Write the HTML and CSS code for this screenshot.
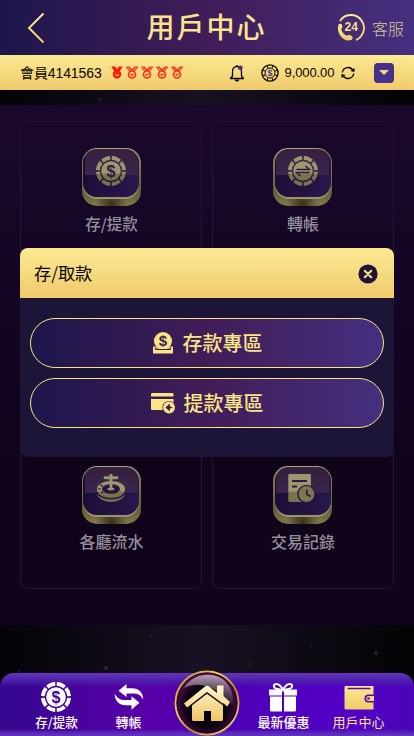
FILE: index.html
```html
<!DOCTYPE html>
<html lang="zh-Hant">
<head>
<meta charset="utf-8">
<meta name="viewport" content="width=device-width, initial-scale=1">
<title>用戶中心</title>
<link rel="stylesheet" href="styles.css">
</head>
<body>
<svg class="defs" width="0" height="0" aria-hidden="true">
  <defs>
    <linearGradient id="gold" x1="0" y1="0" x2="0" y2="1"><stop offset="0" stop-color="#fbea93"/><stop offset="1" stop-color="#f0ca6c"/></linearGradient>
    <linearGradient id="dim" gradientUnits="userSpaceOnUse" x1="0" y1="0" x2="0" y2="30"><stop offset=".56" stop-color="#9d976f"/><stop offset=".62" stop-color="#797349"/></linearGradient>
    <symbol id="ring" viewBox="0 0 30 30"><circle cx="15" cy="15" r="13.100" fill="none" stroke="currentColor" stroke-width="3.800" pathLength="80" stroke-dasharray="8.4 1.6" stroke-dashoffset="-.8"/><circle cx="15" cy="15" r="9.800" fill="currentColor"/></symbol>
    <symbol id="dim-ring" viewBox="0 0 30 30"><circle cx="15" cy="15" r="13.100" fill="none" stroke="url(#dim)" stroke-width="3.800" pathLength="80" stroke-dasharray="8.4 1.6" stroke-dashoffset="-.8"/><circle cx="15" cy="15" r="9.800" fill="url(#dim)"/></symbol>
    <symbol id="medal" viewBox="0 0 12 13"><path d="M.5 1h2.800L6 4 8.700 1h2.800L8.300 5.200M.5 1l3.200 4.200M2.800 1.300L6 5l3.200-3.700" fill="none" stroke="currentColor" stroke-width="1.100"/><circle cx="6" cy="8.500" r="3.500" fill="none" stroke="currentColor" stroke-width="1.600"/><path d="M4.300 8l1.500 1.500L8 7.300" fill="none" stroke="currentColor" stroke-width="1.100"/></symbol>
  </defs>
</svg>
<div class="page">
  <header class="top">
    <svg class="back" width="18" height="32" viewBox="0 0 18 32"><path d="M16.500 1.500L2 16l14.500 14.500" fill="none" stroke="url(#gold)" stroke-width="2"/></svg>
    <h1>用戶中心</h1>
    <a class="service">
      <svg width="30" height="30" viewBox="0 0 30 30"><path d="M4 8A13 13 0 1 1 20 27" fill="none" stroke="url(#gold)" stroke-width="1.900"/><path d="M2.500 11.500c1-1.300 2.600-1 3.300 0l.7 2.500c.1 1-1.500 1.500-1.200 2.600.7 2.800 2.600 4.800 5.200 6 .9.400 1.500-1.200 2.700-.8l2.600 1.200c1.300.8 1 3.300-.5 4-7.500 2.500-15.500-6-12.800-15.500z" fill="url(#gold)"/><text x="15.300" y="18" text-anchor="middle" class="hours">24</text></svg>
      <span>客服</span>
    </a>
  </header>
  <div class="member">
    <span class="name">會員4141563</span>
    <div class="medals">
      <svg viewBox="0 0 12 13"><path d="M.2 .5h4L6 3 7.800.5h4L8.900 5.200a4.300 4.300 0 1 1-5.800 0z" fill="#fb1d08"/><circle cx="6" cy="8.500" r="1.800" fill="#f7dc83"/><path d="M4.700 7l1.300 1.400L8 6.500" fill="none" stroke="#fb1d08" stroke-width="1.200"/></svg>
      <svg viewBox="0 0 12 13"><use href="#medal"/></svg><svg viewBox="0 0 12 13"><use href="#medal"/></svg><svg viewBox="0 0 12 13"><use href="#medal"/></svg><svg viewBox="0 0 12 13"><use href="#medal"/></svg>
    </div>
    <svg class="bell" width="16" height="18" viewBox="0 0 16 18"><path d="M8 1v1M3.500 12V7.500C3.500 4.500 5 2.500 8 2.500s4.500 2 4.500 5V12l2 2.500h-13z" fill="none" stroke="#090500" stroke-width="1.300" stroke-linejoin="round"/><path d="M5.700 15.500a2.300 2 0 0 0 4.600 0z" fill="#090500"/><circle cx="11.300" cy="3.800" r="2.400" fill="#45308a"/></svg>
    <svg class="coin" width="18" height="18" viewBox="0 0 18 18"><circle cx="9" cy="9" r="8.100" fill="none" stroke="#090500" stroke-width="1.300"/><circle cx="9" cy="9" r="6.500" fill="none" stroke="#090500" stroke-width="2" pathLength="80" stroke-dasharray="2 8" stroke-dashoffset="-4"/><circle cx="9" cy="9" r="5" fill="none" stroke="#090500" stroke-width="1"/><text x="9" y="12.200" text-anchor="middle" class="coin-sign">$</text></svg>
    <span class="balance">9,000.00</span>
    <svg class="refresh" width="14" height="14" viewBox="0 0 14 14"><path d="M1.300 6.500A5.800 5.800 0 0 1 12 4.300M12.700 7.500A5.800 5.800 0 0 1 2 9.700" fill="none" stroke="#090500" stroke-width="1.300"/><path d="M13.500 2v4l-4-1zM.5 12V8l4 1z" fill="#090500"/></svg>
    <button class="drop"><svg width="10" height="5" viewBox="0 0 10 5"><path d="M0 0h10L5 5z" fill="#f7df86"/></svg></button>
  </div>

  <main>
    <section class="card"><div class="tile"><svg width="30" height="30" viewBox="0 0 30 30"><use href="#dim-ring"/><text x="15" y="20.600" text-anchor="middle" class="sign tile-sign">$</text></svg></div><span class="slashed">存/提款</span></section>
    <section class="card"><div class="tile"><svg width="30" height="30" viewBox="0 0 30 30"><use href="#dim-ring"/><path d="M8.500 13.500h13L17.500 10M21.500 16.500h-13l4 3.500" fill="none" stroke="#2d1a43" stroke-width="1.500"/></svg></div><span>轉帳</span></section>
    <section class="card"></section>
    <section class="card"></section>
    <section class="card"><div class="tile"><svg width="30" height="30" viewBox="0 0 30 30"><path d="M1 15v4.500C1 23.500 7 28 15 28s14-4.500 14-8.500V15z" fill="#777048"/><path d="M1 18c1 4 6.500 6.700 14 6.700S28 22 29 18" fill="none" stroke="#211348" stroke-width="1.200"/><ellipse cx="15" cy="15" rx="14" ry="8" fill="url(#dim)"/><ellipse cx="15" cy="15" rx="9" ry="4.800" fill="#271442"/><path d="M4 10.500l3 2M2 15h3M5 19l2-1.500" stroke="#271442" stroke-width="1.100"/><path d="M13.600 0h2.800v2.300H21a1.400 1.400 0 0 1 0 2.900h-4.600v8.600c3 .3 3.500 2.700-1.400 2.700s-4.400-2.400-1.400-2.700V5.200H9a1.400 1.400 0 0 1 0-2.900h4.600z" fill="#9d976f"/></svg></div><span>各廳流水</span></section>
    <section class="card"><div class="tile"><svg width="30" height="30" viewBox="0 0 30 30"><path d="M1.200 0h20.500q1.200 0 1.200 1.200V28H1.500Q.3 28 .3 26.800V1.200Q.3 0 1.500 0z" fill="url(#dim)"/><path d="M4 7h15M4 12.500h5" stroke="#2d1a43" stroke-width="1.800"/><circle cx="18.500" cy="20" r="9.300" fill="#2b183f"/><circle cx="18.500" cy="20" r="7.900" fill="#7d774d"/><path d="M18.800 15.500v5l4 2" fill="none" stroke="#2b183f" stroke-width="1.600"/></svg></div><span>交易記錄</span></section>
  </main>

  <div class="dialog" role="dialog">
    <div class="dialog-head"><span>存/取款</span>
      <svg width="20" height="20" viewBox="0 0 20 20"><circle cx="10" cy="10" r="9.600" fill="#1d1538"/><path d="M6.800 6.800l6.400 6.400M13.200 6.800l-6.400 6.400" stroke="#f7df86" stroke-width="2.200" stroke-linecap="round"/></svg>
    </div>
    <div class="dialog-body">
      <button class="pill first"><svg width="20" height="22" viewBox="0 0 20 22"><circle cx="10" cy="9" r="9" fill="#f9e586"/><path d="M0 14.500h2.800l1.200 2h12l1.200-2H20V21.500H0z" fill="#f9e586"/><path d="M2.300 15.500v2h15.400v-2" fill="none" stroke="#3a1e56" stroke-width="1"/><text x="10" y="14.300" text-anchor="middle" class="sign pill-sign">$</text></svg><span>存款專區</span></button>
      <button class="pill"><svg class="bank" width="24" height="22" viewBox="0 0 24 22"><path d="M1.500 1h19.500q1.500 0 1.500 1v2.500H0V2q0-1 1.500-1zM0 7h22.500v11H1.500Q0 18 0 17z" fill="#f9e586"/><circle cx="18" cy="15.500" r="6.600" fill="#3a1e56"/><circle cx="18" cy="15.500" r="5.900" fill="#f9e586"/><path d="M14.500 15.500l4.300-4v2.700l3 1.300-3 1.300v2.700z" fill="#3a1e56"/></svg><span>提款專區</span></button>
    </div>
  </div>

  <nav>
    <a class="n1"><svg width="30" height="30" viewBox="0 0 30 30"><use href="#ring"/><text x="15" y="20.600" text-anchor="middle" class="sign nav-sign">$</text></svg><span class="slashed">存/提款</span></a>
    <a class="n2"><svg width="30" height="30" viewBox="0 0 30 30"><path d="M4.500 8.700L12.500 2v4.200h5.700c6.500 0 11 4.300 11 11.300-2.300-4.500-5.500-6-10-6h-6.700V15zM25.500 20.800l-8 6.900v-4.400h-5.700C5 23.300.6 18.500.6 11.500c2.300 4.800 5.900 6.500 10.200 6.500h6.700v-3.700z" fill="#fff"/></svg><span>轉帳</span></a>
    <a class="n3"><svg width="30" height="30" viewBox="0 0 30 30"><path d="M15 8C11-1 3.500 1.500 6.500 5.700 7.800 7.300 12 7.500 15 8c3-.5 7.200-.7 8.500-2.300C26.500 1.500 19 -1 15 8z" fill="none" stroke="#fff" stroke-width="2"/><path d="M1 7.500h13v6H1zM16 7.500h13v6H16zM2 14.500h12v15H3.500Q2 29.500 2 28zM16 14.500h12V28q0 1.500-1.500 1.500H16z" fill="#fff"/></svg><span>最新優惠</span></a>
    <a class="n4 active"><svg width="30" height="30" viewBox="0 0 30 30"><path d="M1 4h28.500v23.500H2q-1.500 0-1.500-1.500V5z" fill="url(#gold)"/><path d="M3.500 6.500h23" stroke="#5707ae" stroke-width="1.500"/><path d="M30 12.500h-5.500a4 4 0 0 0 0 8H30z" fill="#5707ae"/><path d="M30 14h-5.300a2.500 2.500 0 0 0 0 5H30z" fill="#f4d477"/><circle cx="24.500" cy="16.500" r="1.300" fill="#5707ae"/></svg><span>用戶中心</span></a>
    <a class="home"><svg width="66" height="66" viewBox="0 0 66 66">
      <defs><radialGradient id="orb" cx=".5" cy=".55" r=".55"><stop offset="0" stop-color="#000"/><stop offset=".6" stop-color="#0b0210"/><stop offset=".85" stop-color="#3e0d3f"/><stop offset="1" stop-color="#641953"/></radialGradient><linearGradient id="rim" x1="0" y1="0" x2="1" y2="1"><stop offset="0" stop-color="#b98830"/><stop offset=".35" stop-color="#f1ce62"/><stop offset=".6" stop-color="#b98532"/><stop offset="1" stop-color="#ffe589"/></linearGradient><linearGradient id="shine" x1="0" y1="0" x2="0" y2="1"><stop offset="0" stop-color="#fff" stop-opacity=".6"/><stop offset="1" stop-color="#b5a2bc" stop-opacity=".15"/></linearGradient><linearGradient id="house" x1="0" y1="0" x2="0" y2="1"><stop offset="0" stop-color="#fff6cf"/><stop offset="1" stop-color="#efc667"/></linearGradient></defs>
      <circle cx="33" cy="33" r="31.500" fill="url(#orb)" stroke="url(#rim)" stroke-width="2"/><circle cx="33" cy="33" r="30" fill="none" stroke="#210719"/>
      <path d="M10 18C17 7 28 4 37 5c14 1 23 14 22 28l-5 1C47 20 28 9 10 18z" fill="url(#shine)"/>
      <path d="M43 15.500h6.500V26L56 32l-2.700 4.500L49 33v16.500q0 1.500-1.500 1.500H37V41h-7v10H19.500q-1.500 0-1.500-1.500V34l-4.500 4L10 33.500 31 16.500q2-1.500 4 0L43 23z" fill="url(#house)"/><path d="M13.500 38L33 23l20 14.500" fill="none" stroke="#170719" stroke-width="1.500"/>
    </svg></a>
  </nav>
</div>
</body>
</html>
```
FILE: styles.css
```css
* { box-sizing: border-box; }
body { margin: 0; background: #07050c; font-family: "Liberation Sans", "Noto Sans CJK TC", sans-serif; }
button { font: inherit; padding: 0; border: 0; }
svg { display: block; flex: none; }
.defs { position: absolute; }
.page {
  position: relative; width: 414px; height: 736px; overflow: hidden; display: flex; flex-direction: column;
  background:
    radial-gradient(circle at 106px 668px, #38353c 0, transparent 3px),
    radial-gradient(circle at 376px 653px, #323035 0, transparent 3px),
    radial-gradient(circle at 250px 664px, #2d2932 0, transparent 2px),
    radial-gradient(circle at 19px 671px, #232127 0, transparent 2px),
    radial-gradient(circle at 151px 636px, #292531 0, transparent 2px),
    radial-gradient(circle at 311px 646px, #211e26 0, transparent 2px),
    radial-gradient(circle at 100px 99px, #2a2730 0, transparent 2px),
    linear-gradient(90deg, #040307, #191124 48%, #030305);
}
.top { height: 55px; flex: none; display: grid; grid-template-columns: 1fr auto 1fr; align-items: center; padding: 0 10px 0 27px; background: linear-gradient(90deg, #1d164b, #411d58 50%, #44307f); }
.top h1 { margin: 3px 15px 0 -3px; font-size: 28px; line-height: 40px; font-weight: 500; letter-spacing: 2px; color: #f9e48d; }
.service { justify-self: end; display: flex; align-items: center; gap: 6px; color: #d8c394; font-size: 16px; line-height: 24px; }
.service span { padding-top: 4px; font-weight: 300; }
.hours { font: bold 12px "Liberation Sans", sans-serif; fill: #f7df86; }
.member { height: 35px; flex: none; display: flex; align-items: center; padding: 0 20px; background: linear-gradient(#fbea93, #f0ca6c); color: #090500; font-size: 14px; }
.name { width: 89.500px; margin-top: -2px; font-size: 14px; letter-spacing: -.1px; white-space: nowrap; }
.medals { display: flex; gap: 3px; margin-left: 1px; color: #fb2d18; }
.medals svg { width: 12px; height: 13px; }
.bell { margin-left: 46px; }
.coin { margin-left: 16px; }
.coin-sign { font: bold 9px "Liberation Sans", sans-serif; fill: #45308a; }
.balance { margin-left: 6px; width: 51px; font-size: 13px; letter-spacing: -.1px; }
.refresh { margin-left: 5px; }
.drop { margin-left: auto; width: 20px; height: 20px; border-radius: 4px; background: #45308a; display: grid; place-items: center; }
main { margin-top: 15px; height: 520px; padding: 16px 20px; display: grid; grid-template-columns: 1fr 1fr; grid-template-rows: repeat(2, 149px) 150px; gap: 10px; align-content: start; background: linear-gradient(#19082b, #130523 40%, #10041b 70%); }
.card { border: 1px solid #25133a; border-radius: 8px; padding-top: 26px; display: flex; flex-direction: column; align-items: center; color: #94909a; font-family: "Noto Sans CJK TC", sans-serif; font-size: 16px; font-weight: 500; line-height: 24px; }
.card:nth-child(even) { padding-right: 1px; }
.card > span { margin-top: 5px; padding-left: 1px; }
.card .slashed { font-size: 15.500px; }
.tile { position: relative; isolation: isolate; width: 59px; height: 58px; border-radius: 15px; padding-top: 8px; background: radial-gradient(ellipse at 50% 100%, #35301a, transparent 38%), linear-gradient(#8f885c, #645c37 75%, #817a4b); box-shadow: inset 0 1px #aaa17e; display: flex; align-items: flex-start; justify-content: center; }
.tile::after { content: ""; position: absolute; z-index: -1; inset: 1px 1.500px 9px; border-radius: 14px; background: linear-gradient(#35203d, #3b244d) 50% 0 / 53px 26px no-repeat, linear-gradient(110deg, #160d36, #21113f 50%, #281a50); box-shadow: 0 2px #9d926c; }
.sign { font-family: "Liberation Sans", sans-serif; font-weight: bold; font-size: 16px; }
.tile-sign { fill: #2d1a43; }
.nav-sign { fill: #4904a0; }
.pill-sign { fill: #3a1e56; font-size: 15px; }
.dialog { position: absolute; left: 20px; top: 248px; width: 374px; height: 209px; border-radius: 8px; overflow: hidden; background: #1d1538; }
.dialog-head { height: 50px; padding: 0 16.500px 0 14px; display: flex; align-items: center; justify-content: space-between; background: linear-gradient(#fbea93, #f0ca6c); font-family: "Noto Sans CJK TC", sans-serif; font-size: 17.200px; color: #090500; }
.dialog-head span { margin-top: -2px; }
.dialog-head svg { margin-top: 1px; }
.dialog-body { padding: 20px 10px; display: flex; flex-direction: column; gap: 10px; }
.pill { height: 50px; border: 1px solid #f9e586; border-radius: 25px; display: flex; align-items: center; justify-content: center; gap: 10px; background: linear-gradient(90deg, #1d164b, #411d58 50%, #44307f); color: #f9e586; font-size: 20px; font-weight: 500; line-height: 30px; }
.pill span { padding-top: 1px; }
.first { padding-left: 1px; }
.pill .bank { margin-right: -1px; }
nav { position: absolute; left: 0; top: 673px; width: 414px; height: 63px; display: grid; grid-template-columns: 112px 33px 124px 85px 60px; border-radius: 14px 14px 0 0; color: #fff; background: linear-gradient(#6734c0 0, #4c22aa 7px, transparent 14px, transparent 56px, #592ab5 60px, #5f32c3), linear-gradient(90deg, #34068d, #5800a9 35%, #4c00b5 55%, #5400c8 85%, #4b05b8); font-family: "Noto Sans CJK TC", sans-serif; font-size: 13px; line-height: 19px; font-weight: 500; }
nav a { display: flex; flex-direction: column; align-items: center; padding-top: 9px; white-space: nowrap; }
nav .slashed { font-size: 12.600px; padding-left: 1px; }
.n1 { grid-column: 1; }
.n2 { grid-column: 2; }
.n3 { grid-column: 4; margin-left: -56px; }
.n3 svg { margin-left: -2px; }
.n4 { grid-column: 5; margin-left: -51px; }
.active { color: #f9e58c; font-weight: 400; }
nav .home { position: absolute; left: 174px; top: -3px; padding: 0; }
```
